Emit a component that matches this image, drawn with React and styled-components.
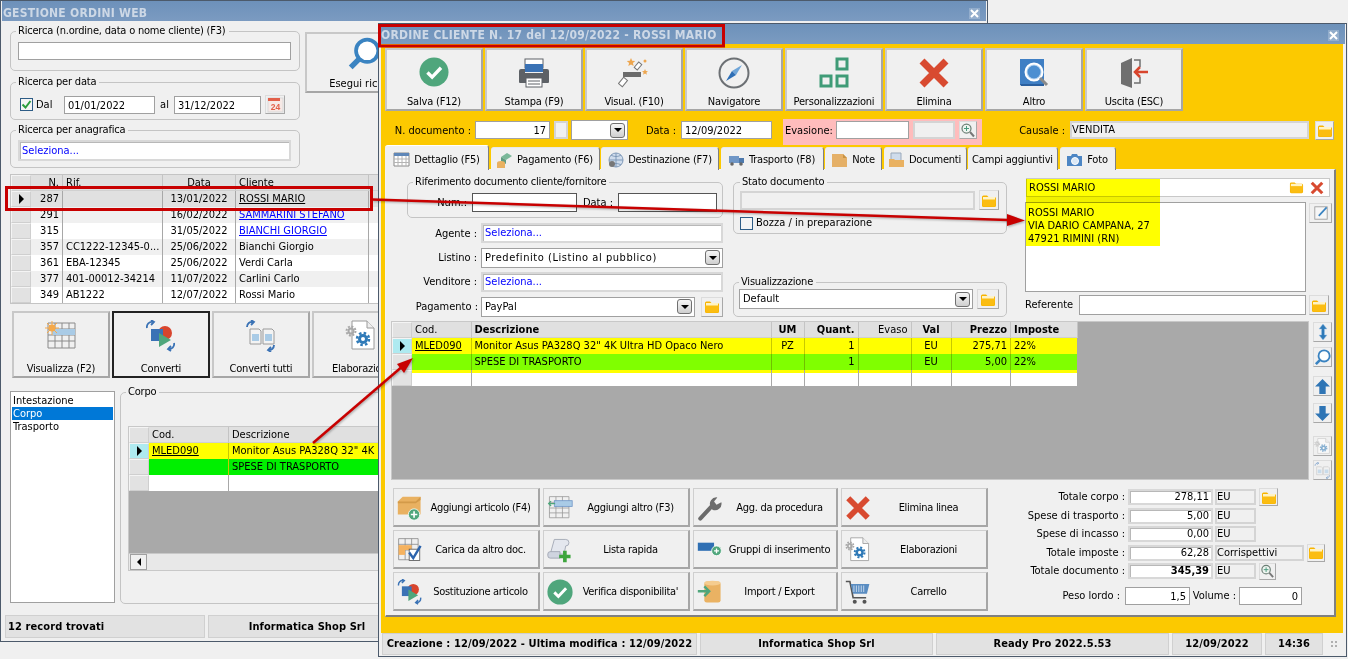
import React from 'react';
import styled, { createGlobalStyle } from 'styled-components';

const GlobalStyle = createGlobalStyle`
  html, body { margin: 0; height: 100%; background: #f0f0f0; overflow: hidden; }
  body { font: 11px/14px "DejaVu Sans Condensed", "Noto Sans", sans-serif; color: #000; }
  * { box-sizing: border-box; }
`;

const Desktop = styled.div`
  position: relative;
  width: 1348px;
  height: 659px;
  overflow: hidden;
`;

const Win = styled.section`
  position: absolute;
  left: ${p => p.$x}px;
  top: ${p => p.$y}px;
  width: ${p => p.$w}px;
  height: ${p => p.$h}px;
  display: flex;
  flex-direction: column;
  border: 1px solid #4c5a6b;
  background: #f0f0f0;
  padding: 0 1px;
`;

const TitleBar = styled.header`
  flex: none;
  height: 20px;
  display: flex;
  align-items: center;
  justify-content: space-between;
  padding: ${p => p.$pt || 2}px 6px 0 1px;
  background: linear-gradient(#6d91ba, #7b9bc1);
  color: #cdd8e6;
  font-size: 12px;
  font-weight: bold;
  letter-spacing: 0.25px;
`;

const CloseBox = styled.span`
  width: 11px;
  height: 11px;
  display: flex;
  align-items: center;
  justify-content: center;
  background: rgba(255, 255, 255, 0.22);
`;

const BackBody = styled.div`
  flex: 1;
  padding: 3px 0 0 8px;
  min-height: 0;
`;

const TopRow = styled.div`
  display: flex;
  gap: 5px;
`;

const LeftStack = styled.div`
  width: 290px;
  display: flex;
  flex-direction: column;
  gap: 4px;
`;

const Group = styled.fieldset`
  margin: ${p => p.$m || 0};
  padding: ${p => p.$pad || '0 7px'};
  height: ${p => p.$h}px;
  width: ${p => (p.$w ? `${p.$w}px` : 'auto')};
  min-width: 0;
  border: 1px solid #c4c4c4;
  border-radius: 5px;
`;

const Legend = styled.legend`
  padding: 0 3px 0 2px;
  margin-left: ${p => p.$ml ?? -2}px;
  height: 14px;
  line-height: 14px;
  letter-spacing: -0.2px;
`;

const Field = styled.div`
  flex: none;
  width: ${p => (p.$w ? `${p.$w}px` : '100%')};
  height: ${p => p.$h || 18}px;
  line-height: ${p => (p.$h || 18) - 1}px;
  padding: 0 3px;
  margin-left: ${p => p.$ml || 0}px;
  background: #fff;
  border: 1px solid ${p => (p.$dark ? '#555' : '#a0a0a0')};
  color: ${p => (p.$blue ? '#0000ff' : '#000')};
  text-align: ${p => p.$align || 'left'};
  font-weight: ${p => (p.$bold ? 'bold' : 'normal')};
  white-space: nowrap;
  overflow: hidden;
`;

const SoftField = styled(Field)`
  border: 2px solid #d8d8d8;
  box-shadow: inset 1px 1px 0 #b8b8b8;
  padding: 0 2px;
  line-height: ${p => (p.$h || 18) - 4}px;
`;

const GreyField = styled(Field)`
  background: #f0f0f0;
  border: 2px solid #d4d4d4;
  padding: 0;
  line-height: ${p => (p.$h || 18) - 5}px;
`;

const Row = styled.div`
  display: flex;
  align-items: ${p => (p.$start ? 'flex-start' : 'center')};
  margin-top: ${p => p.$mt || 0}px;
  margin-left: ${p => p.$ml || 0}px;
  gap: ${p => p.$gap || 0}px;
`;

const Label = styled.span`
  flex: none;
  width: ${p => (p.$w ? `${p.$w}px` : 'auto')};
  padding-right: ${p => p.$pr || 0}px;
  padding-top: ${p => (p.$dn ? 2 : 0)}px;
  text-align: ${p => p.$align || 'right'};
  white-space: nowrap;
`;

const WideText = styled.span`
  letter-spacing: 0.55px;
`;

const Check = styled.span`
  flex: none;
  width: 13px;
  height: 13px;
  margin-left: ${p => p.$ml || 0}px;
  margin-right: 3px;
  border: 1px solid #2d5c86;
  background: #f4f4f4;
  display: flex;
  align-items: center;
  justify-content: center;
`;

const SmallBtn = styled.button`
  flex: none;
  width: ${p => p.$w || 20}px;
  height: ${p => p.$h || 20}px;
  margin-left: ${p => p.$ml || 0}px;
  margin-top: ${p => p.$mt || 0}px;
  padding: 0;
  display: flex;
  align-items: center;
  justify-content: center;
  background: #f0f0f0;
  border: 1px solid;
  border-color: #dcdcdc #a8a8a8 #a8a8a8 #dcdcdc;
  svg { opacity: ${p => (p.$faded ? 0.55 : 1)}; }
`;

const BigBtn = styled.button`
  flex: none;
  width: ${p => p.$w || 98}px;
  height: ${p => p.$h || 63}px;
  padding: ${p => p.$top || 7}px 0 0;
  display: flex;
  flex-direction: column;
  align-items: center;
  font: inherit;
  letter-spacing: -0.2px;
  color: #000;
  background: #f0f0f0;
  border: 2px solid;
  border-color: ${p => (p.$active ? '#222' : '#c8c8c8 #a6a6a6 #a6a6a6 #c8c8c8')};
  overflow: hidden;
  white-space: nowrap;
  span { margin-top: auto; }
`;

const SearchBtn = styled(BigBtn)`
  margin-top: 8px;
  letter-spacing: 0;
`;

const DataGrid = styled.div`
  display: grid;
  grid-template-columns: ${p => p.$cols};
  grid-auto-rows: 16px;
  flex: none;
  justify-content: start;
  background: ${p => p.$bg || '#f0f0f0'};
  border: ${p => (p.$bare ? 'none' : '1px solid #c4c4c4')};
  margin-top: ${p => p.$mt || 0}px;
  align-content: start;
`;

const Cell = styled.div`
  padding: 0 3px;
  line-height: 16px;
  white-space: nowrap;
  overflow: hidden;
  text-align: ${p => p.$align || 'left'};
  font-weight: ${p => (p.$bold ? 'bold' : 'normal')};
  text-decoration: ${p => (p.$link ? 'underline' : 'none')};
  color: ${p => (p.$blue ? '#0000ff' : '#000')};
  background: ${p => (p.$strip ? 'linear-gradient(#ffff00 3px, #fff 3px)' : p.$bg || '#fff')};
  border-right: 1px solid ${p => p.$line || '#a8a8a8'};
`;

const HeadCell = styled(Cell)`
  background: #e0e0e0;
  border-right-color: #c4c4c4;
  border-bottom: 1px solid #d0d0d0;
`;

const Indicator = styled.div`
  display: flex;
  align-items: center;
  justify-content: center;
  background: ${p => p.$bg || '#e2e2e2'};
  border: 1px solid #cfcfcf;
  border-left-color: #f4f4f4;
  border-top-color: #f4f4f4;
`;

const Marker = styled.i`
  width: 0;
  height: 0;
  border-left: 5px solid #000;
  border-top: 5px solid transparent;
  border-bottom: 5px solid transparent;
`;

const LowerRow = styled.div`
  display: flex;
  gap: 5px;
  margin-top: 7px;
`;

const ListBox = styled.ul`
  flex: none;
  width: 105px;
  height: 212px;
  margin: 6px 0 0;
  padding: 2px 1px;
  list-style: none;
  background: #fff;
  border: 1px solid #a0a0a0;
`;

const ListItem = styled.li`
  padding-left: 1px;
  height: 13px;
  line-height: 13px;
  background: ${p => (p.$on ? '#0078d7' : 'transparent')};
  color: ${p => (p.$on ? '#fff' : '#000')};
`;

const GreyPane = styled.div`
  display: flex;
  flex-direction: column;
  background: #a9a9a9;
  border: 1px solid #c8c8c8;
  width: ${p => p.$w}px;
  height: ${p => p.$h}px;
  margin-top: ${p => p.$mt || 0}px;
`;

const ScrollBar = styled.div`
  margin-top: auto;
  height: 17px;
  display: flex;
  background: #e8e8e8;
  border-top: 1px solid #c8c8c8;
`;

const ScrollBtn = styled.span`
  width: 17px;
  margin-left: 1px;
  display: flex;
  align-items: center;
  justify-content: center;
  background: #f0f0f0;
  border: 1px solid #a0a0a0;
  i {
    width: 0;
    height: 0;
    border-right: 4px solid #000;
    border-top: 4px solid transparent;
    border-bottom: 4px solid transparent;
  }
`;

const StatusBar = styled.footer`
  flex: none;
  height: ${p => p.$h || 23}px;
  margin-bottom: ${p => p.$mb || 3}px;
  padding-left: ${p => p.$pl || 3}px;
  display: flex;
  gap: 3px;
`;

const StatusSeg = styled.div`
  flex: none;
  width: ${p => p.$w}px;
  padding: 0 ${p => (p.$left ? 2 : 3)}px;
  display: flex;
  align-items: center;
  justify-content: ${p => (p.$left ? 'flex-start' : 'center')};
  background: #e2e2e2;
  border: 1px solid #d0d0d0;
  font-weight: bold;
  letter-spacing: 0.1px;
  white-space: nowrap;
  overflow: hidden;
`;

const Grip = styled.span`
  flex: none;
  align-self: center;
  margin-left: 4px;
  width: 8px;
  height: 8px;
  background: radial-gradient(circle, #b0b0b0 1px, transparent 1.2px) 0 0 / 4px 4px;
`;

/* ---- front window ---- */

const YellowBody = styled.div`
  flex: 1;
  min-height: 0;
  margin: 0 2px 0 1px;
  padding: 4px 7px 0 4px;
  background: #fcc900;
`;

const Toolbar = styled.nav`
  display: flex;
  gap: 2px;
`;

const DocRow = styled.div`
  display: flex;
  align-items: center;
  height: 26px;
  margin-top: 8px;
  padding-bottom: 4px;
`;

const PinkZone = styled.div`
  flex: none;
  align-self: stretch;
  width: 199px;
  margin: 0 0 -4px 11px;
  padding: 0 0 4px 2px;
  background: #ffbcbc;
  display: flex;
  align-items: center;
`;

const TabStrip = styled.div`
  display: flex;
  align-items: flex-end;
  gap: 1.5px;
  height: 25px;
  position: relative;
  z-index: 1;
  margin-bottom: -1px;
`;

const Tab = styled.div`
  flex: none;
  width: ${p => p.$w}px;
  height: ${p => (p.$on ? 25 : 23)}px;
  padding-top: ${p => (p.$on ? 3 : 2)}px;
  display: flex;
  align-items: center;
  justify-content: center;
  gap: 4px;
  letter-spacing: -0.2px;
  white-space: nowrap;
  background: #f0f0f0;
  border-right: 1px solid #808080;
  border-top: 1px solid ${p => (p.$on ? '#fff' : '#e8e8e8')};
  border-radius: 3px 3px 0 0;
`;

const TabPanel = styled.div`
  height: 448px;
  display: flex;
  flex-direction: column;
  background: #f0f0f0;
  border: 1px solid #f4f4f4;
  border-right: 2px solid #808080;
  border-bottom: 2px solid #808080;
`;

const TopForm = styled.div`
  flex: none;
  height: 151px;
  padding: 5px 0 0 21px;
  display: grid;
  grid-template-columns: 316px 274px 307px;
  column-gap: 10px;
  & > :last-child { margin-left: 8px; }
`;

const Column = styled.div`
  display: flex;
  flex-direction: column;
  min-width: 0;
  margin-top: ${p => p.$mt || 0}px;
`;

const FormList = styled.div`
  display: grid;
  grid-auto-rows: 20px;
  row-gap: 4.5px;
  margin-top: 5px;
`;

const SelectBox = styled.div`
  flex: none;
  width: ${p => p.$w}px;
  height: ${p => p.$h || 20}px;
  margin-left: ${p => p.$ml || 0}px;
  padding: 0 2px 0 3px;
  display: flex;
  align-items: center;
  justify-content: space-between;
  background: #fff;
  border: 1px solid #a0a0a0;
`;

const DropBtn = styled.span`
  width: 15px;
  height: 15px;
  display: flex;
  align-items: center;
  justify-content: center;
  background: linear-gradient(#f6f6f6, #cfcfcf);
  border: 1px solid #707070;
  border-radius: 3px;
  i {
    width: 0;
    height: 0;
    border-top: 4px solid #000;
    border-left: 4px solid transparent;
    border-right: 4px solid transparent;
  }
`;

const NameBox = styled.div`
  width: 304px;
  height: 19px;
  margin-left: 1px;
  padding: 0 5px 0 2px;
  display: flex;
  align-items: center;
  gap: 6px;
  background: #fff;
  border: 1px solid #c8c8c8;
  span { flex: 1; }
`;

const AddressBox = styled.pre`
  flex: none;
  width: 281px;
  height: 90px;
  margin: 0;
  padding: 3px 2px;
  font: inherit;
  line-height: 13px;
  background: #fff;
  border: 1px solid #a0a0a0;
`;

const GridRow = styled.div`
  flex: none;
  display: flex;
  gap: 4px;
  padding-left: 5px;
`;

const SideTools = styled.div`
  width: 19px;
  display: flex;
  flex-direction: column;
  padding-top: 1px;
`;

const BottomRow = styled.div`
  display: flex;
  margin-top: 8px;
  padding-left: 7px;
`;

const ActionGrid = styled.div`
  flex: none;
  display: grid;
  grid-template-columns: 147px 147px 145px 147px;
  grid-auto-rows: 39px;
  gap: 3px;
`;

const ActionBtn = styled.button`
  padding: 2px 0 0 3px;
  display: flex;
  align-items: center;
  font: inherit;
  letter-spacing: -0.3px;
  color: #000;
  background: #f0f0f0;
  border: 1px solid;
  border-width: 1px 2px 2px 1px;
  border-color: #cfcfcf #a6a6a6 #a6a6a6 #cfcfcf;
  white-space: nowrap;
  svg { flex: none; }
  span { flex: 1; text-align: center; }
`;

const Totals = styled.div`
  display: grid;
  grid-auto-rows: 18.5px;
  align-content: start;
`;

const PesoRow = styled(Row)`
  margin-top: 6px;
  height: 18px;
  align-self: start;
`;

/* ---- icons ---- */

const Svg = ({ s = 32, vb = 32, children }) => (
  <svg width={s} height={s} viewBox={`0 0 ${vb} ${vb}`}>{children}</svg>
);

const CloseIcon = () => (
  <svg width="9" height="9" viewBox="0 0 9 9"><path d="M1 1l7 7M8 1L1 8" stroke="#fff" strokeWidth="2" /></svg>
);

const OkIcon = ({ s }) => (
  <Svg s={s}><circle cx="16" cy="16" r="15.5" fill="#4fa67c" /><path d="M9 16.5l5 5 9.5-10" fill="none" stroke="#fff" strokeWidth="3.6" /></Svg>
);

const PrinterIcon = () => (
  <Svg>
    <rect x="7" y="2" width="18" height="9" fill="#fff" stroke="#5d6166" />
    <rect x="7" y="7" width="18" height="8" fill="#3a72b5" />
    <path d="M3 12h4v4h18v-4h4a2 2 0 0 1 2 2v11a1 1 0 0 1-1 1H2a1 1 0 0 1-1-1V14a2 2 0 0 1 2-2z" fill="#5d6166" />
    <rect x="8" y="21" width="16" height="9" fill="#fff" stroke="#5d6166" />
    <path d="M10 24h12M10 27h12" stroke="#5d6166" />
  </Svg>
);

const WandIcon = () => (
  <Svg>
    <rect x="5" y="15" width="18" height="5" fill="#6b6b6b" />
    <rect x="-3.5" y="-2" width="7" height="4" transform="translate(20 9) rotate(-50)" fill="#fff" stroke="#777" />
    <rect x="-4" y="-2.5" width="8" height="5" transform="translate(5 25) rotate(-50)" fill="#fff" stroke="#777" />
    <path d="M13 1l1.2 2.8 3 .3-2.3 2 .8 3-2.7-1.6L10.3 9l.8-3-2.3-2 3-.3z" fill="#eda64f" />
    <path d="M27 12l.9 2 2.1.2-1.6 1.4.5 2.1-1.9-1.1-1.9 1.1.5-2.1-1.6-1.4 2.1-.2z" fill="#eda64f" />
    <circle cx="27" cy="4" r="1.5" fill="#eda64f" />
  </Svg>
);

const CompassIcon = () => (
  <Svg>
    <circle cx="16" cy="16" r="14.5" fill="none" stroke="#6c7074" strokeWidth="2" />
    <path d="M24 8l-10 6 4 4z" fill="#6fa5d8" />
    <path d="M8 24l10-6-4-4z" fill="#2e6fb6" />
  </Svg>
);

const SquaresIcon = () => (
  <Svg>
    <g fill="none" stroke="#3f9b77" strokeWidth="3">
      <rect x="19" y="2" width="10" height="10" />
      <rect x="3" y="19" width="10" height="10" />
      <rect x="19" y="19" width="10" height="10" />
    </g>
  </Svg>
);

const CrossIcon = ({ s }) => (
  <Svg s={s}><path d="M4 4l24 24M28 4L4 28" stroke="#d84a30" strokeWidth="7" /></Svg>
);

const BookIcon = () => (
  <Svg>
    <path d="M2 2h24v26H2z" fill="#3f7fc4" />
    <path d="M2 27h24v2H3z" fill="#2a5f9e" />
    <circle cx="16" cy="15" r="8.5" fill="#b9d6f2" stroke="#fff" strokeWidth="2" />
    <circle cx="16" cy="15" r="6.5" fill="#4c8fd1" />
    <path d="M22 21l7 7" stroke="#8a8a8a" strokeWidth="3" />
  </Svg>
);

const DoorIcon = () => (
  <Svg>
    <path d="M3 6l11-5v30L3 27z" fill="#6f6f6f" />
    <path d="M16 3h6v7M22 20v6h-6" fill="none" stroke="#6f6f6f" strokeWidth="1.5" />
    <path d="M30 15H18M22 10l-5 5 5 5" fill="none" stroke="#d8452d" strokeWidth="2.5" />
  </Svg>
);

const LensIcon = ({ s }) => (
  <Svg s={s}>
    <circle cx="19" cy="13" r="10.5" fill="#fff" stroke="#3a83c1" strokeWidth="3.5" />
    <path d="M11.5 20.5L3.5 28.5" stroke="#3a83c1" strokeWidth="5" />
  </Svg>
);

const ZoomIcon = () => (
  <Svg s={17}>
    <circle cx="13" cy="12" r="9" fill="#eef5f0" stroke="#6c7f75" strokeWidth="2.5" />
    <path d="M13 7v10M8 12h10" stroke="#4a9a7d" strokeWidth="2" />
    <path d="M20 19l8 9" stroke="#777" strokeWidth="4" />
  </Svg>
);

const CalendarIcon = () => (
  <svg width="17" height="17" viewBox="0 0 17 17">
    <rect x="1" y="2" width="15" height="14" fill="#f6e9e6" stroke="#d9d9d9" />
    <path d="M1 2h12v3H1z" fill="#e2604a" />
    <text x="8.5" y="14" fontSize="8.5" fontWeight="bold" textAnchor="middle" fill="#e2604a" fontFamily="Liberation Sans, sans-serif">24</text>
  </svg>
);

const TinyCheck = () => (
  <svg width="11" height="11" viewBox="0 0 11 11"><path d="M1.5 5.5l3 3 5-6.5" fill="none" stroke="#2a9d3c" strokeWidth="2" /></svg>
);

const FolderIcon = ({ s = 16 }) => (
  <svg width={s} height={(s * 13) / 16} viewBox="0 0 16 13">
    <path d="M1 3a1.5 1.5 0 0 1 1.5-1.5H6L7.5 3h6A1.5 1.5 0 0 1 15 4.5v7a1.5 1.5 0 0 1-1.5 1.5h-11A1.5 1.5 0 0 1 1 11.5z" fill="#f7b400" />
    <path d="M2 3h12v3H2z" fill="#fff3c4" />
    <path d="M1 5.5h14l-1 7H2z" fill="#fbbd12" />
  </svg>
);

const TableSun = () => (
  <Svg>
    <path d="M3 3h27v25H3zM3 9h27M3 15h27M3 21h27M10 3v25M17 3v25M24 3v25" fill="none" stroke="#8a8a8a" />
    <rect x="7" y="9" width="23" height="6" fill="#a9cbe6" />
    <circle cx="7" cy="8" r="3.5" fill="#f5a94a" />
    <path d="M7 1v14M0 8h14M2 3l10 10M12 3L2 13" stroke="#f5a94a" />
  </Svg>
);

const ConvertIcon = ({ s }) => (
  <Svg s={s}>
    <circle cx="20" cy="13" r="7" fill="#d8452d" />
    <rect x="6" y="9" width="12" height="12" fill="#3a72b5" />
    <path d="M14 13l12 7-12 7z" fill="#4fa67c" />
    <path d="M2 8a5 5 0 0 1 6-6M6 0l3 2-3 3M29 23a5 5 0 0 1-6 6M26 31l-3-2 3-3" fill="none" stroke="#3a72b5" strokeWidth="1.8" />
  </Svg>
);

const ConvertAllIcon = ({ s }) => (
  <Svg s={s}>
    <path d="M5 9h9l2 2v13H5zM18 9h9l2 2v13H18z" fill="#f3f3f3" stroke="#9a9a9a" />
    <path d="M7 14h7v7H7zM20 14h7v7h-7z" fill="#a9cbe6" />
    <path d="M2 7a5 5 0 0 1 6-5M6 0l3 2-3 3M29 25a5 5 0 0 1-6 5M26 32l-3-2 3-3" fill="none" stroke="#3a72b5" strokeWidth="1.8" />
  </Svg>
);

const GearDoc = ({ s }) => (
  <Svg s={s}>
    <path d="M7 1h15l7 7v21H7z" fill="#fff" stroke="#9a9a9a" />
    <path d="M22 1v7h7" fill="#eee" stroke="#9a9a9a" />
    <circle cx="18" cy="19" r="3.5" fill="none" stroke="#2f7ab8" strokeWidth="3" />
    <circle cx="18" cy="19" r="6" fill="none" stroke="#2f7ab8" strokeWidth="2.5" strokeDasharray="2.5 2.2" />
    <circle cx="6" cy="11" r="2.5" fill="none" stroke="#a8a8a8" strokeWidth="2" />
    <circle cx="6" cy="11" r="4.5" fill="none" stroke="#a8a8a8" strokeWidth="2" strokeDasharray="2 1.5" />
  </Svg>
);

const TabGrid = () => (
  <Svg s={17} vb={17}>
    <path d="M1 2h15v13H1z" fill="#fff" stroke="#8a8a8a" />
    <path d="M1 2h15v3H1z" fill="#5f87b8" />
    <path d="M1 8h15M1 11.5h15M5 5v10M9 5v10M13 5v10" stroke="#b4b4b4" />
  </Svg>
);

const TabMoney = () => (
  <Svg s={17} vb={17}>
    <path d="M5 5l6-4 5 3-6 4z" fill="#7bb89a" />
    <path d="M5 5l5 3v4L5 9z" fill="#5e9c80" />
    <ellipse cx="5" cy="11" rx="4" ry="2" fill="#e9b161" />
    <rect x="1" y="11" width="8" height="5" fill="#e9b161" />
  </Svg>
);

const TabGlobe = () => (
  <Svg s={17} vb={17}>
    <circle cx="9" cy="8" r="7" fill="#cfdcec" stroke="#7f99b8" />
    <path d="M2 8h14M9 1v14M4 3c3 2 7 2 10 0M4 13c3-2 7-2 10 0" fill="none" stroke="#7f99b8" />
    <circle cx="5" cy="12" r="3" fill="#777" />
  </Svg>
);

const TabTruck = () => (
  <Svg s={17} vb={17}>
    <rect x="1" y="4" width="10" height="7" fill="#6f96c6" />
    <rect x="11" y="6" width="5" height="5" fill="#4d79ad" />
    <circle cx="4" cy="12" r="1.8" fill="#666" />
    <circle cx="13" cy="12" r="1.8" fill="#666" />
  </Svg>
);

const TabNote = () => (
  <Svg s={17} vb={17}>
    <path d="M1 2h11l4 4v9H1z" fill="#e5b067" />
    <path d="M12 2v4h4" fill="#c99345" />
  </Svg>
);

const TabDocs = () => (
  <Svg s={17} vb={17}>
    <path d="M3 1h10v8H3z" fill="#cfdcec" stroke="#9aa9bb" />
    <path d="M1 7h5l1 1h9v7H1z" fill="#e9b161" />
  </Svg>
);

const TabCamera = () => (
  <Svg s={17} vb={17}>
    <path d="M1 4h4l1-2h5l1 2h4v10H1z" fill="#4d86c4" />
    <circle cx="9" cy="9" r="3.5" fill="#dbe8f5" stroke="#fff" />
  </Svg>
);

const BoxPlus = () => (
  <Svg s={26}>
    <path d="M1 8l6-6h22v22H1z" fill="#e9b161" />
    <path d="M1 8h22l6-6v4l-6 4H1z" fill="#d39a49" />
    <circle cx="21" cy="24" r="7" fill="#4fa67c" stroke="#fff" />
    <path d="M21 20v8M17 24h8" stroke="#fff" strokeWidth="2" />
  </Svg>
);

const TableArrow = () => (
  <Svg s={26}>
    <path d="M3 2h24v26H3zM3 9h24M3 16h24M3 22h24M11 2v26M19 2v26" fill="none" stroke="#9a9a9a" />
    <rect x="9" y="7" width="22" height="7" fill="#a9cbe6" stroke="#6f96c6" />
    <path d="M2 10.5h8M5 7.5l-3 3 3 3" fill="none" stroke="#4fa67c" strokeWidth="1.5" />
  </Svg>
);

const WrenchIcon = () => (
  <Svg s={26}>
    <path d="M4 29l14-15" stroke="#6c6c6c" strokeWidth="5" strokeLinecap="round" />
    <path d="M17 15a8 8 0 0 1 8-12l-4 5 3 4 6-3a8 8 0 0 1-11 9z" fill="#6c6c6c" />
  </Svg>
);

const TableCheck = () => (
  <Svg s={26}>
    <path d="M2 2h24v26H2zM2 9h24M2 16h24M10 2v26M18 2v26" fill="none" stroke="#8a8a8a" />
    <rect x="2" y="10" width="16" height="6" fill="#f5b25f" />
    <path d="M2 16h8v6H2z" fill="#f5b25f" />
    <rect x="15" y="15" width="13" height="14" fill="#fff" stroke="#555" />
    <path d="M15 19l5 7 9-15" fill="none" stroke="#2c64ad" strokeWidth="3" />
  </Svg>
);

const ScrollPlus = () => (
  <Svg s={26}>
    <path d="M9 3h14a4 4 0 0 1 0 8l-2 10H4z" fill="#e4e7ee" stroke="#9aa0ae" />
    <path d="M1 21a3 3 0 0 1 3-3h12v8H4a3 3 0 0 1-3-3z" fill="#cfd4df" stroke="#9aa0ae" />
    <path d="M22 17v14M15 24h14" stroke="#3da53d" strokeWidth="4.5" />
  </Svg>
);

const BarPlus = () => (
  <Svg s={26}>
    <rect x="1" y="7" width="20" height="10" fill="#2f6fb3" />
    <circle cx="24" cy="17" r="6" fill="#4fa67c" stroke="#fff" />
    <path d="M24 14v6M21 17h6" stroke="#fff" strokeWidth="1.6" />
  </Svg>
);

const CylArrow = () => (
  <Svg s={26}>
    <rect x="9" y="3" width="20" height="26" rx="3" fill="#eab263" />
    <ellipse cx="19" cy="5" rx="10" ry="3" fill="#f5cc8f" />
    <path d="M1 15h13M9 9l6 6-6 6" fill="none" stroke="#4fa67c" strokeWidth="3" />
  </Svg>
);

const CartIcon = () => (
  <Svg s={26}>
    <path d="M1 3h5l4 20h16" fill="none" stroke="#555" strokeWidth="2" />
    <path d="M7 6h23l-3 12H10z" fill="#5a8dc2" />
    <path d="M11 8v8M14 8v8M17 8v8M20 8v8M23 8v8" stroke="#dbe8f5" />
    <circle cx="12" cy="28" r="2.5" fill="#555" />
    <circle cx="24" cy="28" r="2.5" fill="#555" />
  </Svg>
);

const PenIcon = () => (
  <Svg s={18}>
    <rect x="5" y="5" width="22" height="22" fill="#f6f6f6" stroke="#999" strokeWidth="1.5" />
    <path d="M12 21l14-15" stroke="#3a83c1" strokeWidth="3" />
  </Svg>
);

const UpDownIcon = () => (
  <Svg s={16} vb={16}>
    <path d="M8 0l4 5H9.5v6H12l-4 5-4-5h2.5V5H4z" fill="#2f7ab8" stroke="#9cc3e6" strokeWidth="0.5" />
  </Svg>
);

const ArrowIcon = ({ down }) => (
  <Svg s={17} vb={16}>
    <path d={down ? 'M5 1h6v7h4l-7 7-7-7h4z' : 'M8 1l7 7h-4v7H5V8H1z'} fill="#2f75b5" />
  </Svg>
);

/* ---- annotations drawn over the screenshot ---- */

const Marks = styled.svg`
  position: absolute;
  left: 0;
  top: 0;
  pointer-events: none;
`;

const Highlight = styled.rect`
  mix-blend-mode: multiply;
`;

const Pointers = styled.g`
  filter: drop-shadow(1px 1px 1px rgba(0, 0, 0, 0.3));
`;

const Annotations = () => (
  <Marks width="1348" height="659" viewBox="0 0 1348 659">
    <Highlight x="1026" y="179" width="134" height="67" fill="#ffff00" />
    <Pointers>
      <path d="M372 199.5L1008 220" stroke="#c80000" strokeWidth="2.5" />
      <path d="M1025 220.5l-18-6.5v12z" fill="#c80000" />
      <path d="M313 443L404 365" stroke="#c80000" strokeWidth="2.5" />
      <path d="M413 358l-16 6 7 9z" fill="#c80000" />
    </Pointers>
    <g fill="none" stroke="#c80000" strokeWidth="3">
      <rect x="6.5" y="187.5" width="365" height="22" />
      <rect x="379.5" y="25.5" width="344" height="20.5" />
    </g>
  </Marks>
);

/* ---- data ---- */

const orders = [
  { n: 287, rif: '', data: '13/01/2022', cliente: 'ROSSI MARIO', link: true, bg: '#e0e0e0', on: true },
  { n: 291, rif: '', data: '16/02/2022', cliente: 'SAMMARINI STEFANO', link: true, blue: true, bg: '#f0f0f0' },
  { n: 315, rif: '', data: '31/05/2022', cliente: 'BIANCHI GIORGIO', link: true, blue: true, bg: '#fff' },
  { n: 357, rif: 'CC1222-12345-0...', data: '25/06/2022', cliente: 'Bianchi Giorgio', bg: '#f0f0f0' },
  { n: 361, rif: 'EBA-12345', data: '25/06/2022', cliente: 'Verdi Carla', bg: '#fff' },
  { n: 377, rif: '401-00012-34214', data: '11/07/2022', cliente: 'Carlini Carlo', bg: '#f0f0f0' },
  { n: 349, rif: 'AB1222', data: '12/07/2022', cliente: 'Rossi Mario', bg: '#fff' },
];

const mainTools = [
  { label: 'Salva (F12)', icon: <OkIcon s={30} /> },
  { label: 'Stampa (F9)', icon: <PrinterIcon /> },
  { label: 'Visual. (F10)', icon: <WandIcon /> },
  { label: 'Navigatore', icon: <CompassIcon /> },
  { label: 'Personalizzazioni', icon: <SquaresIcon /> },
  { label: 'Elimina', icon: <CrossIcon s={32} /> },
  { label: 'Altro', icon: <BookIcon /> },
  { label: 'Uscita (ESC)', icon: <DoorIcon /> },
];

const tabs = [
  { label: 'Dettaglio (F5)', w: 104, icon: <TabGrid />, on: true },
  { label: 'Pagamento (F6)', w: 109, icon: <TabMoney /> },
  { label: 'Destinazione (F7)', w: 118, icon: <TabGlobe /> },
  { label: 'Trasporto (F8)', w: 103, icon: <TabTruck /> },
  { label: 'Note', w: 57, icon: <TabNote /> },
  { label: 'Documenti', w: 83, icon: <TabDocs /> },
  { label: 'Campi aggiuntivi', w: 90 },
  { label: 'Foto', w: 56, icon: <TabCamera /> },
];

const actions = [
  { label: 'Aggiungi articolo (F4)', icon: <BoxPlus /> },
  { label: 'Aggiungi altro (F3)', icon: <TableArrow /> },
  { label: 'Agg. da procedura', icon: <WrenchIcon /> },
  { label: 'Elimina linea', icon: <CrossIcon s={26} /> },
  { label: 'Carica da altro doc.', icon: <TableCheck /> },
  { label: 'Lista rapida', icon: <ScrollPlus /> },
  { label: 'Gruppi di inserimento', icon: <BarPlus /> },
  { label: 'Elaborazioni', icon: <GearDoc s={26} /> },
  { label: 'Sostituzione articolo', icon: <ConvertIcon s={26} /> },
  { label: "Verifica disponibilita'", icon: <OkIcon s={26} /> },
  { label: 'Import / Export', icon: <CylArrow /> },
  { label: 'Carrello', icon: <CartIcon /> },
];

const lineCols = '20px 59.5px 300px 33px 54px 53px 40px 59.5px 67px';

const BackWindow = () => (
  <Win $x={0} $y={0} $w={988} $h={642}>
    <TitleBar $pt={4}>
      GESTIONE ORDINI WEB
      <CloseBox><CloseIcon /></CloseBox>
    </TitleBar>
    <BackBody>
      <TopRow>
        <LeftStack>
          <Group $h={47}>
            <Legend>Ricerca (n.ordine, data o nome cliente) (F3)</Legend>
            <Row $mt={4}>
              <Field $w={273} />
            </Row>
          </Group>
          <Group $h={45}>
            <Legend>Ricerca per data</Legend>
            <Row $mt={6}>
              <Check $ml={2}><TinyCheck /></Check>
              <Label $w={28} $align="left">Dal</Label>
              <Field $w={91}>01/01/2022</Field>
              <Label $w={19} $align="center">al</Label>
              <Field $w={87}>31/12/2022</Field>
              <SmallBtn $ml={4} $w={20} $h={19}><CalendarIcon /></SmallBtn>
            </Row>
          </Group>
          <Group $h={45} $m="-1px 0 0">
            <Legend>Ricerca per anagrafica</Legend>
            <Row $mt={3}>
              <SoftField $w={273} $h={21} $blue>Seleziona...</SoftField>
            </Row>
          </Group>
        </LeftStack>
        <SearchBtn $w={118} $h={61} $top={3}>
          <LensIcon s={34} />
          <span>Esegui ricerca</span>
        </SearchBtn>
      </TopRow>

      <DataGrid $cols="20px 32px 100px 73px 133px 60px" $mt={6}>
        <Indicator />
        <HeadCell $align="right">N.</HeadCell>
        <HeadCell>Rif.</HeadCell>
        <HeadCell $align="center">Data</HeadCell>
        <HeadCell>Cliente</HeadCell>
        <HeadCell />
        {orders.map(o => (
          <React.Fragment key={o.n}>
            <Indicator>{o.on && <Marker />}</Indicator>
            <Cell $bg={o.bg} $align="right">{o.n}</Cell>
            <Cell $bg={o.bg}>{o.rif}</Cell>
            <Cell $bg={o.bg} $align="center">{o.data}</Cell>
            <Cell $bg={o.bg} $link={o.link} $blue={o.blue}>{o.cliente}</Cell>
            <Cell $bg={o.bg} />
          </React.Fragment>
        ))}
      </DataGrid>

      <Row $mt={7} $ml={2} $gap={2}>
        <BigBtn $h={67}><TableSun /><span>Visualizza (F2)</span></BigBtn>
        <BigBtn $h={67} $active><ConvertIcon /><span>Converti</span></BigBtn>
        <BigBtn $h={67}><ConvertAllIcon /><span>Converti tutti</span></BigBtn>
        <BigBtn $h={67}><GearDoc /><span>Elaborazioni</span></BigBtn>
      </Row>

      <LowerRow>
        <ListBox>
          <ListItem>Intestazione</ListItem>
          <ListItem $on>Corpo</ListItem>
          <ListItem>Trasporto</ListItem>
        </ListBox>
        <Group $h={219} $w={500}>
          <Legend>Corpo</Legend>
          <GreyPane $w={420} $h={145} $mt={27}>
            <DataGrid $cols="20px 80px 1fr" $bare>
              <Indicator />
              <HeadCell>Cod.</HeadCell>
              <HeadCell>Descrizione</HeadCell>
              <Indicator $bg="#aeeaf0"><Marker /></Indicator>
              <Cell $bg="#ffff00" $line="#c9c900" $link>MLED090</Cell>
              <Cell $bg="#ffff00">Monitor Asus PA328Q 32" 4K Ultra HD Opaco Nero</Cell>
              <Indicator />
              <Cell $bg="#00f000" $line="#c9c900" />
              <Cell $bg="#00f000">SPESE DI TRASPORTO</Cell>
              <Indicator />
              <Cell />
              <Cell />
            </DataGrid>
            <ScrollBar><ScrollBtn><i /></ScrollBtn></ScrollBar>
          </GreyPane>
        </Group>
      </LowerRow>
    </BackBody>
    <StatusBar>
      <StatusSeg $w={200} $left>12 record trovati</StatusSeg>
      <StatusSeg $w={198}>Informatica Shop Srl</StatusSeg>
    </StatusBar>
  </Win>
);

const FrontWindow = () => (
  <Win $x={378} $y={23} $w={969} $h={634}>
    <TitleBar>
      ORDINE CLIENTE N. 17 del 12/09/2022 - ROSSI MARIO
      <CloseBox><CloseIcon /></CloseBox>
    </TitleBar>
    <YellowBody>
      <Toolbar>
        {mainTools.map(t => (
          <BigBtn key={t.label}>{t.icon}<span>{t.label}</span></BigBtn>
        ))}
      </Toolbar>

      <DocRow>
        <Label $w={90} $pr={4} $dn>N. documento :</Label>
        <Field $w={75} $align="right">17</Field>
        <GreyField $w={14} $ml={4} />
        <SelectBox $w={57} $ml={3}><span /><DropBtn><i /></DropBtn></SelectBox>
        <Label $w={53} $pr={5} $dn>Data :</Label>
        <Field $w={91}>12/09/2022</Field>
        <PinkZone>
          <Label $w={51} $align="left" $dn>Evasione:</Label>
          <Field $w={73} />
          <GreyField $w={42} $ml={4} />
          <SmallBtn $w={18} $h={18} $ml={4}><ZoomIcon /></SmallBtn>
        </PinkZone>
        <Label $w={88} $pr={5} $dn>Causale :</Label>
        <GreyField $w={239}>VENDITA</GreyField>
        <SmallBtn $w={19} $h={19} $ml={6}><FolderIcon /></SmallBtn>
      </DocRow>

      <TabStrip>
        {tabs.map(t => (
          <Tab key={t.label} $w={t.w} $on={t.on}>{t.icon}{t.label}</Tab>
        ))}
      </TabStrip>

      <TabPanel>
        <TopForm>
          <Column>
            <Group $h={43} $pad="0">
              <Legend $ml={5}>Riferimento documento cliente/fornitore</Legend>
              <Row $mt={4}>
                <Label $w={64} $pr={5}>Num.:</Label>
                <Field $w={105} $h={19} $dark />
                <Label $w={41} $pr={5}>Data :</Label>
                <Field $w={99} $h={19} $dark />
              </Row>
            </Group>
            <FormList>
              <Row>
                <Label $w={74} $pr={4} $dn>Agente :</Label>
                <SoftField $w={242} $h={20} $blue>Seleziona...</SoftField>
              </Row>
              <Row>
                <Label $w={74} $pr={4}>Listino :</Label>
                <SelectBox $w={242}><WideText>Predefinito (Listino al pubblico)</WideText><DropBtn><i /></DropBtn></SelectBox>
              </Row>
              <Row>
                <Label $w={74} $pr={4}>Venditore :</Label>
                <SoftField $w={242} $h={20} $blue>Seleziona...</SoftField>
              </Row>
              <Row>
                <Label $w={74} $pr={3}>Pagamento :</Label>
                <SelectBox $w={214}>PayPal<DropBtn><i /></DropBtn></SelectBox>
                <SmallBtn $w={22} $ml={6}><FolderIcon /></SmallBtn>
              </Row>
            </FormList>
          </Column>

          <Column>
            <Group $h={59} $pad="1px 7px 0 6px">
              <Legend $ml={0}>Stato documento</Legend>
              <Row>
                <GreyField $w={235} $h={19} />
                <SmallBtn $ml={4} $w={20} $h={20}><FolderIcon /></SmallBtn>
              </Row>
              <Row $mt={6}>
                <Check />
                <span>Bozza / in preparazione</span>
              </Row>
            </Group>
            <Group $h={42} $m="41px 0 0" $pad="0 7px 0 5px">
              <Legend $ml={0}>Visualizzazione</Legend>
              <Row>
                <SelectBox $w={234}>Default<DropBtn><i /></DropBtn></SelectBox>
                <SmallBtn $ml={4} $w={22} $h={20}><FolderIcon /></SmallBtn>
              </Row>
            </Group>
          </Column>

          <Column $mt={3}>
            <NameBox>
              <span>ROSSI MARIO</span>
              <FolderIcon s={15} />
              <CrossIcon s={14} />
            </NameBox>
            <Row $mt={5} $start>
              <AddressBox>{'ROSSI MARIO\nVIA DARIO CAMPANA, 27\n47921 RIMINI (RN)'}</AddressBox>
              <SmallBtn $w={23} $h={20} $ml={3} $mt={1}><PenIcon /></SmallBtn>
            </Row>
            <Row $mt={3}>
              <Label $w={54} $align="left">Referente</Label>
              <Field $w={227} $h={20} />
              <SmallBtn $w={20} $h={20} $ml={3}><FolderIcon /></SmallBtn>
            </Row>
          </Column>
        </TopForm>

        <GridRow>
          <GreyPane $w={918} $h={159}>
            <DataGrid $cols={lineCols} $bg="#a9a9a9" $bare>
              <Indicator />
              <HeadCell>Cod.</HeadCell>
              <HeadCell $bold>Descrizione</HeadCell>
              <HeadCell $bold $align="center">UM</HeadCell>
              <HeadCell $bold $align="right">Quant.</HeadCell>
              <HeadCell $align="right">Evaso</HeadCell>
              <HeadCell $bold $align="center">Val</HeadCell>
              <HeadCell $bold $align="right">Prezzo</HeadCell>
              <HeadCell $bold>Imposte</HeadCell>

              <Indicator $bg="#aeeaf0"><Marker /></Indicator>
              <Cell $bg="#ffff00" $line="#c9c900" $link>MLED090</Cell>
              <Cell $bg="#ffff00" $line="#c9c900">Monitor Asus PA328Q 32" 4K Ultra HD Opaco Nero</Cell>
              <Cell $bg="#ffff00" $line="#c9c900" $align="center">PZ</Cell>
              <Cell $bg="#ffff00" $line="#c9c900" $align="right">1</Cell>
              <Cell $bg="#ffff00" $line="#c9c900" />
              <Cell $bg="#ffff00" $line="#c9c900" $align="center">EU</Cell>
              <Cell $bg="#ffff00" $line="#c9c900" $align="right">275,71</Cell>
              <Cell $bg="#ffff00">22%</Cell>

              <Indicator />
              <Cell $bg="#80ff00" $line="#70c000" />
              <Cell $bg="#80ff00" $line="#70c000">SPESE DI TRASPORTO</Cell>
              <Cell $bg="#80ff00" $line="#70c000" />
              <Cell $bg="#80ff00" $line="#70c000" $align="right">1</Cell>
              <Cell $bg="#80ff00" $line="#70c000" />
              <Cell $bg="#80ff00" $line="#70c000" $align="center">EU</Cell>
              <Cell $bg="#80ff00" $line="#70c000" $align="right">5,00</Cell>
              <Cell $bg="#80ff00">22%</Cell>

              <Indicator />
              <Cell $strip /><Cell $strip /><Cell $strip /><Cell $strip />
              <Cell $strip /><Cell $strip /><Cell $strip /><Cell $strip />
            </DataGrid>
          </GreyPane>
          <SideTools>
            <SmallBtn $w={19} $h={20}><UpDownIcon /></SmallBtn>
            <SmallBtn $w={19} $h={20} $mt={5}><LensIcon s={17} /></SmallBtn>
            <SmallBtn $w={19} $h={20} $mt={9}><ArrowIcon /></SmallBtn>
            <SmallBtn $w={19} $h={20} $mt={7}><ArrowIcon down /></SmallBtn>
            <SmallBtn $w={19} $h={20} $mt={13} $faded><GearDoc s={17} /></SmallBtn>
            <SmallBtn $w={19} $h={20} $mt={4} $faded><ConvertAllIcon s={17} /></SmallBtn>
          </SideTools>
        </GridRow>

        <BottomRow>
          <ActionGrid>
            {actions.map(a => (
              <ActionBtn key={a.label}>{a.icon}<span>{a.label}</span></ActionBtn>
            ))}
          </ActionGrid>
          <Totals>
            <Row>
              <Label $w={140} $pr={3}>Totale corpo :</Label>
              <SoftField $w={85} $h={16} $align="right">278,11</SoftField>
              <GreyField $w={41} $h={16} $ml={2}>EU</GreyField>
              <SmallBtn $w={19} $h={18} $ml={3}><FolderIcon /></SmallBtn>
            </Row>
            <Row>
              <Label $w={140} $pr={3}>Spese di trasporto :</Label>
              <SoftField $w={85} $h={16} $align="right">5,00</SoftField>
              <GreyField $w={41} $h={16} $ml={2}>EU</GreyField>
            </Row>
            <Row>
              <Label $w={140} $pr={3}>Spese di incasso :</Label>
              <SoftField $w={85} $h={16} $align="right">0,00</SoftField>
              <GreyField $w={41} $h={16} $ml={2}>EU</GreyField>
            </Row>
            <Row>
              <Label $w={140} $pr={3}>Totale imposte :</Label>
              <SoftField $w={85} $h={16} $align="right">62,28</SoftField>
              <GreyField $w={89} $h={16} $ml={2}>Corrispettivi</GreyField>
              <SmallBtn $w={18} $h={18} $ml={3}><FolderIcon /></SmallBtn>
            </Row>
            <Row>
              <Label $w={140} $pr={3}>Totale documento :</Label>
              <SoftField $w={85} $h={16} $align="right" $bold>345,39</SoftField>
              <GreyField $w={41} $h={16} $ml={2}>EU</GreyField>
              <SmallBtn $w={17} $h={17} $ml={3}><ZoomIcon /></SmallBtn>
            </Row>
            <PesoRow>
              <Label $w={137} $pr={5}>Peso lordo :</Label>
              <Field $w={65} $align="right">1,5</Field>
              <Label $w={49} $pr={3}>Volume :</Label>
              <Field $w={63} $align="right">0</Field>
            </PesoRow>
          </Totals>
        </BottomRow>
      </TabPanel>
    </YellowBody>
    <StatusBar $pl={2} $mb={1} $h={22}>
      <StatusSeg $w={315}>Creazione : 12/09/2022 - Ultima modifica : 12/09/2022</StatusSeg>
      <StatusSeg $w={233}>Informatica Shop Srl</StatusSeg>
      <StatusSeg $w={233}>Ready Pro 2022.5.53</StatusSeg>
      <StatusSeg $w={90}>12/09/2022</StatusSeg>
      <StatusSeg $w={58}>14:36</StatusSeg>
      <Grip />
    </StatusBar>
  </Win>
);

export default function App() {
  return (
    <Desktop>
      <GlobalStyle />
      <BackWindow />
      <FrontWindow />
      <Annotations />
    </Desktop>
  );
}
